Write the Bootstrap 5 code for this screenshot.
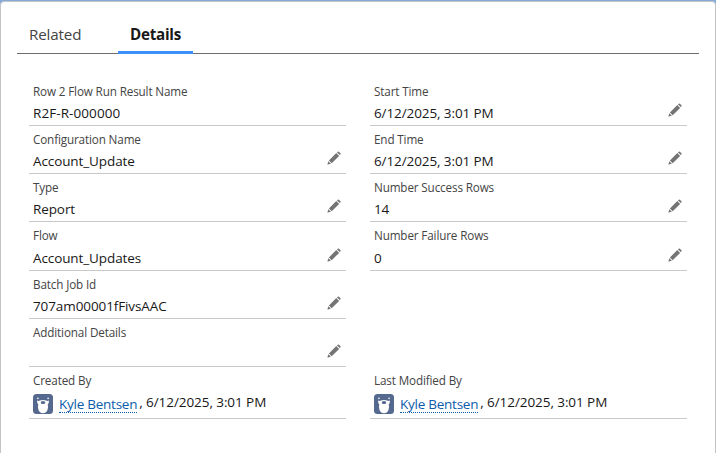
<!DOCTYPE html>
<html lang="en">
<head>
<meta charset="utf-8">
<meta name="viewport" content="width=device-width, initial-scale=1">
<title>Row 2 Flow Run Result</title>
<link href="https://cdn.jsdelivr.net/npm/bootstrap@5.3.0/dist/css/bootstrap.min.css" rel="stylesheet">
<style>
body{font-family:"Open Sans","Noto Sans",sans-serif;background:#86a9d8;color:#181818;height:453px;overflow:hidden;padding-top:1px}
.record-panel{height:470px;border:1px solid #c2c4c8;border-radius:4px;padding:0 16px}
.record-tabs{height:52px;border-bottom:1px solid #706e6b}
.record-tabs .nav-link{height:52px;padding:20px 12px 0;font-size:15.2px;line-height:24px;color:#444;border-radius:0;border-bottom:3px solid transparent;white-space:nowrap}
.tab-related{width:76px;margin-right:25px;letter-spacing:-.15px}
.record-tabs .tab-details{width:75px;color:#181818;font-weight:700;border-bottom-color:#3d90fb;letter-spacing:-.25px}
.fields{padding:24px 11px 0 12px}
.field{width:317px;height:48px;padding:4px 4px 0;border-bottom:1px solid #c9c9c9;white-space:nowrap}
.field-flow{height:49px}
.field-user{height:52px}
.field-label{font-size:11.7px;line-height:18px;color:#444;letter-spacing:-.14px}
.field-value{font-size:13.5px;line-height:20px;padding-top:3px;letter-spacing:-.1px}
.field-flow .field-value{padding-top:4px}
.record-code{letter-spacing:.08px}
.pencil{width:14px;height:14px;margin-right:1px;fill:#747474}
.field-user .field-value{padding-top:3px;letter-spacing:-.07px}
.field-user .user-name{color:#0b5cab;line-height:15px;border-bottom:1px dotted #0b5cab;text-decoration:none;margin:5px 2px 0 6px;letter-spacing:-.25px}
.avatar{width:20px;height:20px;margin-top:2px}
</style>
</head>
<body>
<svg class="d-none">
  <symbol id="pencil" viewBox="0 0 14 14"><path d="M10.7.7q.6-.6 1.2 0l1.5 1.5q.6.6 0 1.2l-.7.7-2.7-2.7zM9.3 2.1l2.8 2.8-7.4 7.3-2.8-2.8zM1.3 10.2l2.6 2.6-2.9.7q-.6.1-.5-.5z"/></symbol>
  <symbol id="bear" viewBox="0 0 20 20"><rect width="20" height="20" rx="3.5" fill="#54698d"/><circle cx="4.9" cy="4.3" r=".9" fill="#e7ecf4"/><circle cx="15.1" cy="4.3" r=".9" fill="#e7ecf4"/><path d="M4 6.6Q5.4 7.2 7 6.6Q10 5.4 13 6.6Q14.6 7.2 16 6.6Q16 9.3 14.7 10.6Q15.6 13.5 14.5 16Q13 19.2 10 19.2Q7 19.2 5.5 16Q4.4 13.5 5.3 10.6Q4 9.3 4 6.6z" fill="#fff"/><ellipse cx="10" cy="8.6" rx="2.3" ry="1.5" fill="#54698d"/></symbol>
</svg>
<main class="record-panel bg-white">
  <nav class="record-tabs nav flex-nowrap">
    <a class="nav-link tab-related" href="#">Related</a>
    <a class="nav-link tab-details active" href="#">Details</a>
  </nav>
  <section class="fields">
    <div class="d-flex gap-4">
      <div class="field"><div class="field-label">Row 2 Flow Run Result Name</div><div class="field-value record-code">R2F-R-000000</div></div>
      <div class="field"><div class="field-label">Start Time</div><div class="field-value d-flex justify-content-between"><span>6/12/2025, 3:01 PM</span><svg class="pencil"><use href="#pencil"/></svg></div></div>
    </div>
    <div class="d-flex gap-4">
      <div class="field"><div class="field-label">Configuration Name</div><div class="field-value d-flex justify-content-between"><span>Account_Update</span><svg class="pencil"><use href="#pencil"/></svg></div></div>
      <div class="field"><div class="field-label">End Time</div><div class="field-value d-flex justify-content-between"><span>6/12/2025, 3:01 PM</span><svg class="pencil"><use href="#pencil"/></svg></div></div>
    </div>
    <div class="d-flex gap-4">
      <div class="field"><div class="field-label">Type</div><div class="field-value d-flex justify-content-between"><span>Report</span><svg class="pencil"><use href="#pencil"/></svg></div></div>
      <div class="field"><div class="field-label">Number Success Rows</div><div class="field-value d-flex justify-content-between"><span>14</span><svg class="pencil"><use href="#pencil"/></svg></div></div>
    </div>
    <div class="d-flex gap-4">
      <div class="field field-flow"><div class="field-label">Flow</div><div class="field-value d-flex justify-content-between"><span>Account_Updates</span><svg class="pencil"><use href="#pencil"/></svg></div></div>
      <div class="field field-flow"><div class="field-label">Number Failure Rows</div><div class="field-value d-flex justify-content-between"><span>0</span><svg class="pencil"><use href="#pencil"/></svg></div></div>
    </div>
    <div class="d-flex gap-4">
      <div class="field"><div class="field-label">Batch Job Id</div><div class="field-value d-flex justify-content-between"><span>707am00001fFivsAAC</span><svg class="pencil"><use href="#pencil"/></svg></div></div>
    </div>
    <div class="d-flex gap-4">
      <div class="field"><div class="field-label">Additional Details</div><div class="field-value d-flex justify-content-end"><svg class="pencil"><use href="#pencil"/></svg></div></div>
    </div>
    <div class="d-flex gap-4">
      <div class="field field-user"><div class="field-label">Created By</div><div class="field-value d-flex align-items-start"><svg class="avatar"><use href="#bear"/></svg><a class="user-name" href="#">Kyle Bentsen</a><span>, 6/12/2025, 3:01 PM</span></div></div>
      <div class="field field-user"><div class="field-label">Last Modified By</div><div class="field-value d-flex align-items-start"><svg class="avatar"><use href="#bear"/></svg><a class="user-name" href="#">Kyle Bentsen</a><span>, 6/12/2025, 3:01 PM</span></div></div>
    </div>
  </section>
</main>
<script src="https://cdn.jsdelivr.net/npm/bootstrap@5.3.0/dist/js/bootstrap.bundle.min.js"></script>
</body>
</html>
